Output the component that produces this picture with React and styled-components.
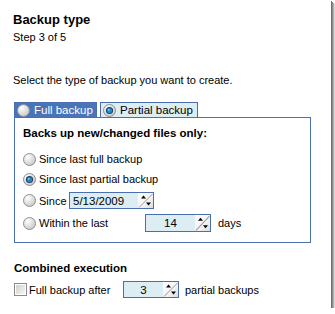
import React from 'react';
import styled, { createGlobalStyle } from 'styled-components';

const GlobalStyle = createGlobalStyle`
  html, body {
    margin: 0;
    padding: 0;
    background: #ffffff;
  }
  body {
    font-family: "Liberation Sans", Arial, sans-serif;
    font-size: 11px;
    color: #000;
  }
`;

const Window = styled.div`
  width: 331px;
  height: 308px;
  box-sizing: border-box;
  background: #fff;
  padding: 12px 0 0 13px;
  box-shadow: 1px 1px 0 #6f6f6f, 2px 2px 0 #8c8c8c, 3px 3px 1px #b0b0b0,
    4px 4px 2px #d4d4d4;
  display: flex;
  flex-direction: column;
`;

const Title = styled.div`
  font-size: 13px;
  font-weight: bold;
  line-height: 16px;
`;

const Sub = styled.div`
  line-height: 14px;
  margin-top: 2px;
`;

const Intro = styled.div`
  line-height: 14px;
  margin-top: 29px;
`;

const TabStrip = styled.div`
  display: flex;
  gap: 3px;
  margin-top: 15px;
  padding-left: 1px;
`;

const Tab = styled.div`
  display: flex;
  align-items: center;
  gap: 4px;
  height: 15px;
  box-sizing: border-box;
  padding: 0 0 0 2px;
  white-space: nowrap;
  font-size: 11.5px;
  width: ${p => p.$w}px;
  background: ${p => (p.$active ? '#dcedf3' : '#4a74b8')};
  color: ${p => (p.$active ? '#000' : '#fff')};
  border: 1px solid #4a6fae;
  border-bottom: none;
`;

const Panel = styled.div`
  width: 297px;
  height: 126px;
  box-sizing: border-box;
  margin-left: 1px;
  border: 1px solid #4a6fae;
  padding: 8px 0 0 8px;
`;

const Bold = styled.div`
  font-weight: bold;
  font-size: 11.5px;
  line-height: 14px;
`;

const Options = styled.div`
  display: flex;
  flex-direction: column;
  margin-top: 9px;
`;

const Row = styled.div`
  display: flex;
  align-items: center;
  height: ${p => p.$h || 20}px;
  gap: 3px;
  white-space: nowrap;
`;

const Label = styled.span`
  display: inline-block;
  width: ${p => (p.$w ? `${p.$w}px` : 'auto')};
`;

const SpinBox = styled.div`
  display: flex;
  width: ${p => p.$w}px;
  height: ${p => p.$h || 17}px;
  box-sizing: border-box;
  border: 1px solid #4a6fae;
  background: #dcedf3;
  margin-right: 4px;
`;

const SpinValue = styled.div`
  flex: 1;
  display: flex;
  align-items: center;
  justify-content: ${p => (p.$center ? 'center' : 'flex-start')};
  padding-left: ${p => (p.$center ? 0 : 3)}px;
  font-size: 11.5px;
`;

const SpinButton = styled.div`
  width: 15px;
  background: linear-gradient(135deg, #ffffff 0%, #f2f2f2 60%, #dcdcdc 100%);
`;

const Section = styled.div`
  margin-top: 18px;
  margin-left: 1px;
`;

const CheckRow = styled.div`
  display: flex;
  align-items: center;
  margin-top: 6px;
  height: 17px;
  gap: 2px;
  white-space: nowrap;
`;

const Radio = ({ checked }) => (
  <svg width="13" height="13" viewBox="0 0 13 13" style={{ flex: 'none' }}>
    <defs>
      <radialGradient id="rgrad" cx="0.35" cy="0.3" r="0.8">
        <stop offset="0" stopColor="#ffffff" />
        <stop offset="1" stopColor="#c4c4c4" />
      </radialGradient>
    </defs>
    <circle cx="6.5" cy="6.5" r="6" fill="url(#rgrad)" stroke="#8f8f8f" />
    {checked && (
      <>
        <circle cx="6.5" cy="6.5" r="3.6" fill="#1f3f5e" />
        <circle cx="6.5" cy="6.5" r="2.6" fill="#1e8ad0" />
        <circle cx="5.8" cy="5.8" r="0.9" fill="#8fd0ff" />
      </>
    )}
  </svg>
);

const Check = () => (
  <svg width="13" height="13" viewBox="0 0 13 13" style={{ flex: 'none' }}>
    <defs>
      <linearGradient id="cg" x1="0" y1="0" x2="1" y2="1">
        <stop offset="0" stopColor="#cfcfcf" />
        <stop offset="1" stopColor="#f6f6f6" />
      </linearGradient>
    </defs>
    <rect x="0.5" y="0.5" width="12" height="12" fill="#fff" stroke="#8a8a8a" />
    <rect x="2" y="2" width="9" height="9" fill="url(#cg)" />
  </svg>
);

const Arrows = () => (
  <svg width="15" height="100%" viewBox="0 0 15 15" preserveAspectRatio="none">
    <line x1="1" y1="14.5" x2="14.5" y2="1" stroke="#9a9a9a" strokeWidth="1" />
    <path d="M3 5.5 L5.5 2.5 L8 5.5 Z" fill="#000" />
    <path d="M8 9.5 L13 9.5 L10.5 12.5 Z" fill="#000" />
  </svg>
);

const Spinner = ({ value, w, h, center }) => (
  <SpinBox $w={w} $h={h}>
    <SpinValue $center={center}>{value}</SpinValue>
    <SpinButton>
      <Arrows />
    </SpinButton>
  </SpinBox>
);

const App = () => (
  <>
    <GlobalStyle />
    <Window>
      <Title>Backup type</Title>
      <Sub>Step 3 of 5</Sub>
      <Intro>Select the type of backup you want to create.</Intro>
      <TabStrip>
        <Tab $w={83}>
          <Radio />
          Full backup
        </Tab>
        <Tab $w={98} $active>
          <Radio checked />
          Partial backup
        </Tab>
      </TabStrip>
      <Panel>
        <Bold>Backs up new/changed files only:</Bold>
        <Options>
          <Row>
            <Radio />
            Since last full backup
          </Row>
          <Row>
            <Radio checked />
            Since last partial backup
          </Row>
          <Row $h={23}>
            <Radio />
            <Label $w={27}>Since</Label>
            <Spinner value="5/13/2009" w={85} />
          </Row>
          <Row $h={22}>
            <Radio />
            <Label $w={103}>Within the last</Label>
            <Spinner value="14" w={66} h={18} center />
            days
          </Row>
        </Options>
      </Panel>
      <Section>
        <Bold>Combined execution</Bold>
        <CheckRow>
          <Check />
          <Label $w={92}>Full backup after</Label>
          <Spinner value="3" w={56} center />
          partial backups
        </CheckRow>
      </Section>
    </Window>
  </>
);

export default App;
